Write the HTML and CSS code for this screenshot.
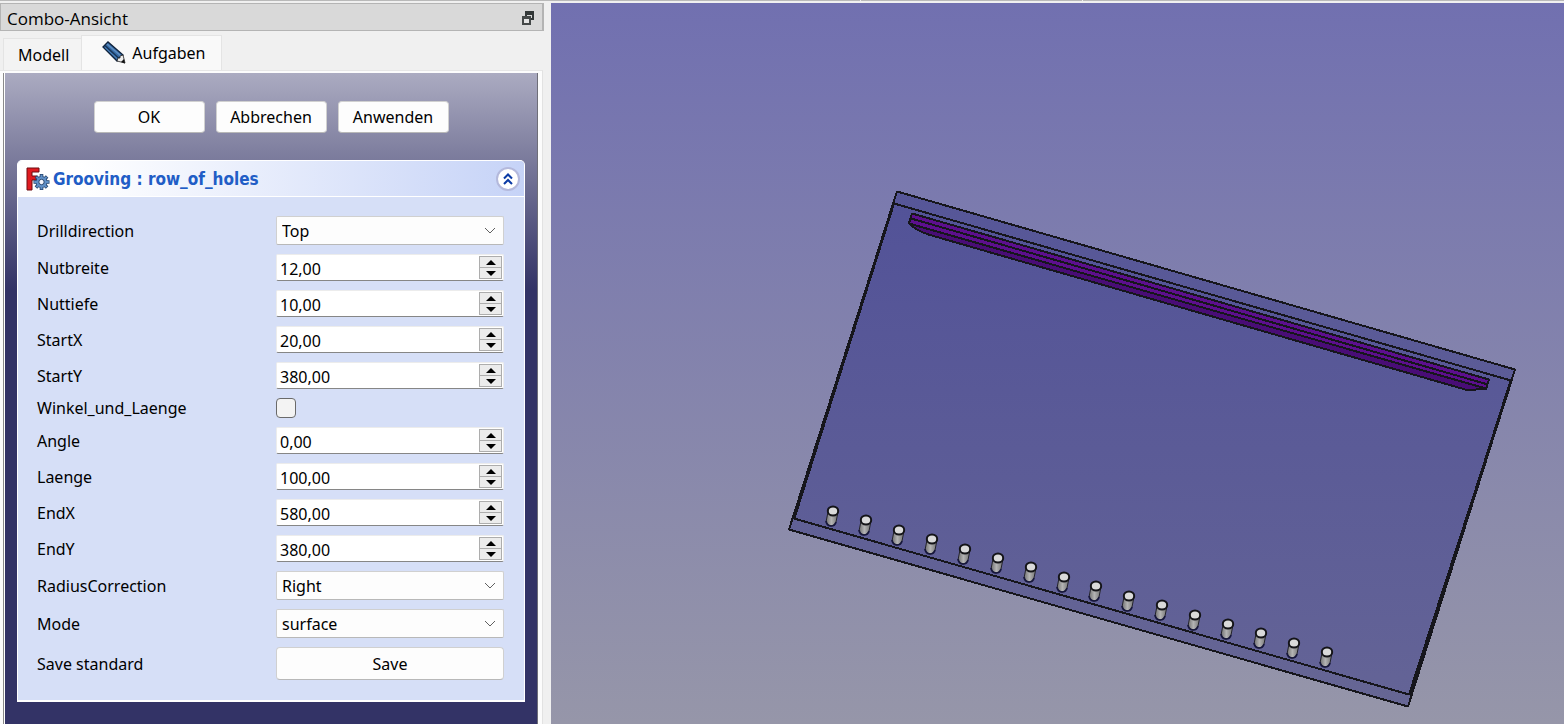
FILE: index.html
```html
<!DOCTYPE html>
<html lang="de">
<head>
<meta charset="utf-8">
<title>Combo-Ansicht</title>
<link rel="stylesheet" href="styles.css">
</head>
<body>
<div class="topline"><span></span><span></span><span></span></div>
<div class="workspace">
  <aside class="dock">
    <header class="dock-title">
      <h1>Combo-Ansicht</h1>
      <button class="float-btn" type="button" aria-label="Andocken">
        <svg width="14" height="14" viewBox="0 0 14 14" shape-rendering="crispEdges"><path d="M4 0H13V9H10V7H11V4H6V5H4Z" fill="#333838"/><path d="M1 5H10V14H1Z" fill="#444848"/><path d="M3 8H8V12H3Z" fill="#e4e4e4"/></svg>
      </button>
    </header>
    <nav class="tabs" role="tablist">
      <button class="tab" type="button" role="tab" aria-selected="false">Modell</button>
      <button class="tab active" type="button" role="tab" aria-selected="true">
        <svg width="24" height="24" viewBox="0 0 24 24"><path d="M1 6 6 1 21 14 15 20Z" fill="#356aa5" stroke="#10233c" stroke-width="1.300"/><path d="M3 4.500 17 17.500" stroke="#183456" stroke-width="1.500"/><path d="M5 3 19 15" stroke="#5f8fc2" stroke-width="1.500"/><path d="M3 6.500 15 17.500" stroke="#4a82bb"/><path d="M15 20 16 17 18 17 18 15 21 14 23 22Z" fill="#eee" stroke="#222" stroke-width=".8"/><path d="M19 21 22 18 23 22.500Z" fill="#111"/></svg>
        Aufgaben
      </button>
    </nav>
    <div class="pane">
      <form class="tasks">
        <div class="actions">
          <button class="btn" type="button">OK</button>
          <button class="btn" type="button">Abbrechen</button>
          <button class="btn" type="button">Anwenden</button>
        </div>
        <section class="box">
          <header class="box-head">
            <svg width="24" height="24" viewBox="0 0 24 24"><path d="M1 1H13V5H6V9H11V13H6V23H1Z" fill="#e01b20" stroke="#6d0c10"/><g transform="translate(15.500 15)"><g stroke="#26456e" stroke-width="3.600"><path d="M0-8V8M-8 0H8M-5.600-5.600 5.600 5.600M-5.600 5.600 5.600-5.600"/></g><circle r="6" fill="#26456e"/><g stroke="#5f8fc6" stroke-width="2"><path d="M0-7.300V7.300M-7.300 0H7.300M-5.100-5.100 5.100 5.100M-5.100 5.100 5.100-5.100"/></g><circle r="5.200" fill="#5f8fc6"/><circle r="2.700" fill="#f4f6fd" stroke="#26456e"/></g></svg>
            <h2>Grooving : row_of_holes</h2>
            <button class="fold" type="button" aria-label="Einklappen"><svg width="12" height="14" viewBox="0 0 12 14" fill="none" stroke="#0b3ba5" stroke-width="2"><path d="M2 6.500 6 2.500l4 4M2 12 6 8l4 4"/></svg></button>
          </header>
          <div class="fields">
            <label for="dir">Drilldirection</label>
            <div class="combo"><select id="dir"><option>Top</option></select><svg width="12" height="7" viewBox="0 0 12 7"><path d="M1 1 6 6 11 1"/></svg></div>
            <label for="nb">Nutbreite</label>
            <div class="spin"><input id="nb" value="12,00"><div class="steps"><button type="button" aria-label="Mehr"></button><button type="button" aria-label="Weniger"></button></div></div>
            <label for="nt">Nuttiefe</label>
            <div class="spin"><input id="nt" value="10,00"><div class="steps"><button type="button" aria-label="Mehr"></button><button type="button" aria-label="Weniger"></button></div></div>
            <label for="sx">StartX</label>
            <div class="spin"><input id="sx" value="20,00"><div class="steps"><button type="button" aria-label="Mehr"></button><button type="button" aria-label="Weniger"></button></div></div>
            <label for="sy">StartY</label>
            <div class="spin"><input id="sy" value="380,00"><div class="steps"><button type="button" aria-label="Mehr"></button><button type="button" aria-label="Weniger"></button></div></div>
            <label for="wl">Winkel_und_Laenge</label>
            <input class="check" id="wl" type="checkbox">
            <label for="an">Angle</label>
            <div class="spin"><input id="an" value="0,00"><div class="steps"><button type="button" aria-label="Mehr"></button><button type="button" aria-label="Weniger"></button></div></div>
            <label for="la">Laenge</label>
            <div class="spin"><input id="la" value="100,00"><div class="steps"><button type="button" aria-label="Mehr"></button><button type="button" aria-label="Weniger"></button></div></div>
            <label for="ex">EndX</label>
            <div class="spin"><input id="ex" value="580,00"><div class="steps"><button type="button" aria-label="Mehr"></button><button type="button" aria-label="Weniger"></button></div></div>
            <label for="ey">EndY</label>
            <div class="spin"><input id="ey" value="380,00"><div class="steps"><button type="button" aria-label="Mehr"></button><button type="button" aria-label="Weniger"></button></div></div>
            <label for="rc">RadiusCorrection</label>
            <div class="combo"><select id="rc"><option>Right</option></select><svg width="12" height="7" viewBox="0 0 12 7"><path d="M1 1 6 6 11 1"/></svg></div>
            <label for="mo">Mode</label>
            <div class="combo"><select id="mo"><option>surface</option></select><svg width="12" height="7" viewBox="0 0 12 7"><path d="M1 1 6 6 11 1"/></svg></div>
            <label for="save">Save standard</label>
            <button class="btn save" id="save" type="button">Save</button>
          </div>
        </section>
      </form>
    </div>
  </aside>
  <main class="view">
    <svg class="scene" viewBox="551 3 1013 721" role="img" aria-label="3D-Ansicht">
      <defs>
        <linearGradient id="plate" gradientUnits="userSpaceOnUse" x1="0" y1="191" x2="0" y2="706"><stop offset="0" stop-color="#525298"/><stop offset="1" stop-color="#646496"/></linearGradient>
        <linearGradient id="rim" gradientUnits="userSpaceOnUse" x1="0" y1="191" x2="0" y2="706"><stop offset="0" stop-color="#565698"/><stop offset="1" stop-color="#666694"/></linearGradient>
        <linearGradient id="metal"><stop offset="0" stop-color="#6e6e6e"/><stop offset=".45" stop-color="#b4b4b4"/><stop offset="1" stop-color="#707070"/></linearGradient>
        <g id="pin"><path d="M-5 1-7 11Q-6 15-2 15Q2 15 3 11L5 1Z" fill="url(#metal)" stroke="#24242c" stroke-width="1"/><path d="M-7 10Q-6 15-2 15Q2 15 3 11" fill="none" stroke="#17173c" stroke-width="1.700"/><ellipse rx="5.200" ry="4.500" fill="#dadada" stroke="#141418" stroke-width="2"/></g>
      </defs>
      <g stroke="#16161c" stroke-width="2" shape-rendering="crispEdges" stroke-linejoin="round">
        <path d="M897 191.500 1515 369.500 1408 706.500 789 529.500Z" fill="url(#rim)"/>
        <path d="M894 203.500 1511 380.500 1409 694.500 794 518.500Z" fill="url(#plate)"/>
        <path d="M894 202 794 518M1511 381 1410 695" fill="none" stroke-width="3"/>
        <path d="M912 213.500 1489 379.500 1486 389 1467 390 930 235Q916 231 909 223Z" fill="#490d76"/>
        <path d="M912 213.500 1489 379.500 1486 388.500 909 223.500Z" fill="#5d0f8e"/>
        <path d="M911 218.500 1488 384.500" fill="none"/>
      </g>
      <use href="#pin" x="833" y="511"/><use href="#pin" x="866" y="520"/><use href="#pin" x="899" y="530"/><use href="#pin" x="932" y="539"/>
      <use href="#pin" x="965" y="549"/><use href="#pin" x="998" y="558"/><use href="#pin" x="1031" y="567"/><use href="#pin" x="1064" y="577"/>
      <use href="#pin" x="1096" y="586"/><use href="#pin" x="1129" y="596"/><use href="#pin" x="1162" y="605"/><use href="#pin" x="1195" y="615"/>
      <use href="#pin" x="1228" y="624"/><use href="#pin" x="1261" y="633"/><use href="#pin" x="1294" y="643"/><use href="#pin" x="1327" y="652"/>
    </svg>
  </main>
</div>
</body>
</html>
```
FILE: styles.css
```css
* { box-sizing: border-box; }
body {
  margin: 0;
  height: 100vh;
  display: flex;
  flex-direction: column;
  overflow: hidden;
  background: #f0f0f0;
  color: #000;
  font: 16px/20px "Noto Sans", sans-serif;
}
button, input, select { font: inherit; color: inherit; margin: 0; }
h1, h2 { margin: 0; }
.topline { display: flex; gap: 1px; height: 3px; padding-bottom: 2px; }
.topline span { background: #b9b9b9; flex: 481; }
.topline span:first-child { flex: 860; }
.topline span:nth-child(2) { flex: 221; }
.workspace { flex: 1; display: flex; min-height: 0; }
.dock { flex: none; width: 544px; margin-right: 7px; display: flex; flex-direction: column; }
.dock-title {
  display: flex;
  align-items: center;
  justify-content: space-between;
  height: 28px;
  padding: 4px 7px 0 6px;
  background: #d9d9d9;
  border: 1px solid #b4b4b4;
  border-right-width: 2px;
}
.dock-title h1 { font-family: "Open Sans", sans-serif; font-weight: 400; font-size: 17px; }
.float-btn { display: flex; padding: 0 0 3px; border: 0; background: none; }
.tabs { display: flex; align-items: flex-end; height: 39px; padding: 0 3px; }
.tab { height: 32px; padding: 0 12px 0 14px; background: #f3f3f3; border: 1px solid #e4e4e4; border-right: 0; border-bottom: 0; }
.tab.active { display: flex; align-items: center; gap: 6px; height: 35px; padding: 0 15px 0 20px; background: #f9f9f9; border-right: 1px solid #e4e4e4; border-bottom: 0; }
.pane { flex: 1; min-height: 0; padding: 2px 4px 0 3px; margin-right: 1px; background: #fcfcfc; border-right: 1px solid #e2e2e2; border-top: 1px solid #e6e6e6; }
.tasks {
  height: 100%;
  padding: 28px 12px 0 13px;
  border-left: 1px solid #8a8a8a;
  border-right: 1px solid #6e6e78;
  box-shadow: inset 1px 0 #fff;
  background: linear-gradient(#ababc1, #7b7b9c 86px, #333366 216px);
}
.actions { display: flex; justify-content: center; gap: 11px; margin-bottom: 27px; }
.btn { height: 33px; padding: 0; background: #fdfdfd; border: 1px solid #d0d0d0; border-bottom-color: #b8b8b8; border-radius: 4px; }
.actions .btn { width: 111px; height: 32px; }
.box { border: 1px solid #fff; border-bottom-width: 2px; border-radius: 5px 5px 0 0; background: #d6dff7; }
.box-head {
  display: flex;
  align-items: center;
  gap: 3px;
  height: 36px;
  padding: 0 4px 0 8px;
  border-bottom: 1px solid #fff;
  border-radius: 4px 4px 0 0;
  background: linear-gradient(90deg, #fff 12%, #c6d3f7);
}
.box-head h2 { flex: 1; font-family: "DejaVu Sans Condensed", "DejaVu Sans", sans-serif; font-size: 17px; color: #215dc6; }
.fold { display: flex; align-items: center; justify-content: center; width: 24px; height: 24px; padding: 0; border: 2px solid #b4b9dc; border-radius: 50%; background: #fff; }
.fields { display: grid; grid-template-columns: 230px minmax(0, 1fr); gap: 9px; align-items: center; padding: 19px 20px 20px 19px; }
.combo { position: relative; height: 29px; }
.combo select { appearance: none; width: 100%; height: 100%; padding: 0 5px; background: #fdfdfd; border: 1px solid #d0d0d0; border-bottom-color: #b8b8b8; border-radius: 2px; }
.combo svg { position: absolute; right: 8px; top: 11px; fill: none; stroke: #606060; pointer-events: none; }
.spin { display: flex; height: 27px; background: #fff; border: 1px solid #ececec; border-bottom-color: #868686; border-radius: 2px; }
.spin input { flex: 1; min-width: 0; padding: 2px 3px 0; border: 0; background: none; outline: 0; }
.steps { display: flex; flex-direction: column; width: 23px; height: 23px; margin: 1px 1px 1px 0; border: 1px solid #adadad; }
.steps button { flex: 1; display: flex; align-items: center; justify-content: center; padding: 0; border: 0; background: #ececec; }
.steps button + button { border-top: 1px solid #adadad; }
.steps button::before { content: ""; border: 5px solid transparent; border-top: 0; border-bottom: 5px solid #000; }
.steps button + button::before { border-top: 5px solid #000; border-bottom: 0; }
.check { appearance: none; width: 20px; height: 20px; border: 1px solid #6a6a6a; border-radius: 4px; background: #f3f3f3; }
.save { width: 100%; }
.view { flex: 1; min-width: 0; background: linear-gradient(#7170b0, #9696a9); }
.scene { display: block; width: 100%; height: 100%; }
```
